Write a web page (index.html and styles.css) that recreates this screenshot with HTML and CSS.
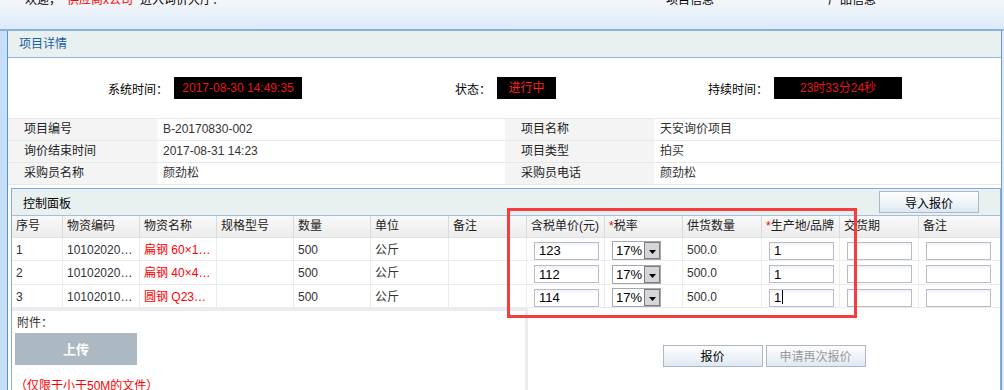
FILE: index.html
```html
<!DOCTYPE html>
<html lang="zh-CN">
<head>
    <meta charset="UTF-8">
    <meta name="viewport" content="width=device-width, initial-scale=1.0">
    <title>项目详情</title>
    <link rel="stylesheet" href="styles.css">
</head>
<body>
    <div class="topbar">
        <div class="welcome">欢迎，<span class="supplier">供应商x公司</span>进入询价大厅：</div>
        <div class="topnav">
            <span>项目信息</span>
            <span>产品信息</span>
        </div>
    </div>

    <div class="frame">
        <div class="rail"></div>
        <div class="main">
            <div class="panel-title">项目详情</div>

            <div class="time-row">
                <span class="tlabel">系统时间：</span>
                <span class="tbox tbox-wide">2017-08-30 14:49:35</span>
                <span class="tlabel tlabel-state">状态：</span>
                <span class="tbox tbox-state">进行中</span>
                <span class="tlabel tlabel-last">持续时间：</span>
                <span class="tbox tbox-wide">23时33分24秒</span>
            </div>

            <table class="info">
                <colgroup>
                    <col class="info-label">
                    <col class="info-value">
                    <col class="info-label">
                    <col class="info-value2">
                </colgroup>
                <tr>
                    <th>项目编号</th><td>B-20170830-002</td>
                    <th>项目名称</th><td>天安询价项目</td>
                </tr>
                <tr>
                    <th>询价结束时间</th><td>2017-08-31 14:23</td>
                    <th>项目类型</th><td>拍买</td>
                </tr>
                <tr>
                    <th>采购员名称</th><td>颜劲松</td>
                    <th>采购员电话</th><td>颜劲松</td>
                </tr>
            </table>

            <div class="control">
                <div class="control-head">
                    <span>控制面板</span>
                    <button class="btn">导入报价</button>
                </div>

                <table class="grid">
                    <colgroup>
                        <col class="w-no">
                        <col class="w-77"><col class="w-77"><col class="w-77"><col class="w-77">
                        <col class="w-78"><col class="w-78"><col class="w-78"><col class="w-78">
                        <col class="w-79"><col class="w-78"><col class="w-79"><col class="w-81">
                    </colgroup>
                    <tr>
                        <th>序号</th><th>物资编码</th><th>物资名称</th><th>规格型号</th><th>数量</th><th>单位</th><th>备注</th>
                        <th>含税单价(元)</th><th><span class="req">*</span>税率</th><th>供货数量</th><th><span class="req">*</span>生产地/品牌</th><th>交货期</th><th>备注</th>
                    </tr>
                    <tr>
                        <td>1</td><td>101020200011</td><td class="name">扁钢 60×10 Q235</td><td></td><td>500</td><td>公斤</td><td></td>
                        <td class="f"><input class="txt" value="123"></td>
                        <td class="f"><span class="sel"><span class="sel-val">17%</span><span class="sel-btn"><svg width="7" height="4" viewBox="0 0 7 4"><path d="M0 0h7L3.5 4z" fill="#000"/></svg></span></span></td>
                        <td>500.0</td>
                        <td class="f"><input class="txt" value="1"></td>
                        <td class="f"><input class="txt" value=""></td>
                        <td class="f"><input class="txt" value=""></td>
                    </tr>
                    <tr>
                        <td>2</td><td>101020200025</td><td class="name">扁钢 40×4 Q235</td><td></td><td>500</td><td>公斤</td><td></td>
                        <td class="f"><input class="txt" value="112"></td>
                        <td class="f"><span class="sel"><span class="sel-val">17%</span><span class="sel-btn"><svg width="7" height="4" viewBox="0 0 7 4"><path d="M0 0h7L3.5 4z" fill="#000"/></svg></span></span></td>
                        <td>500.0</td>
                        <td class="f"><input class="txt" value="1"></td>
                        <td class="f"><input class="txt" value=""></td>
                        <td class="f"><input class="txt" value=""></td>
                    </tr>
                    <tr>
                        <td>3</td><td>101020100003</td><td class="name">圆钢 Q235-A</td><td></td><td>500</td><td>公斤</td><td></td>
                        <td class="f"><input class="txt" value="114"></td>
                        <td class="f"><span class="sel"><span class="sel-val">17%</span><span class="sel-btn"><svg width="7" height="4" viewBox="0 0 7 4"><path d="M0 0h7L3.5 4z" fill="#000"/></svg></span></span></td>
                        <td>500.0</td>
                        <td class="f"><span class="fake-input">1<span class="caret"></span></span></td>
                        <td class="f"><input class="txt" value=""></td>
                        <td class="f"><input class="txt" value=""></td>
                    </tr>
                </table>

                <div class="bottom">
                    <div class="attach">
                        <div class="attach-label">附件：</div>
                        <button class="upload">上传</button>
                        <div class="note">（仅限于小于50M的文件）</div>
                    </div>
                    <div class="actions">
                        <button class="btn">报价</button>
                        <button class="btn btn-off">申请再次报价</button>
                    </div>
                </div>
            </div>
        </div>
        <div class="rail-right"></div>
    </div>

    <!-- annotation box drawn over the editable columns -->
    <div class="highlight"></div>
</body>
</html>
```

FILE: styles.css
```css
* {
    box-sizing: border-box;
}

html, body {
    margin: 0;
    height: 100%;
}

body {
    font-family: "Liberation Sans", "Noto Sans CJK SC", sans-serif;
    font-size: 12px;
    color: #000;
    background: #fff;
    overflow: hidden;
    position: relative;
}

/* top strip (page is scrolled a little) */
.topbar {
    height: 29px;
    display: flex;
    padding: 0 128px 0 25px;
    background: linear-gradient(#f5f7f9, #dcebfb);
    overflow: hidden;
}

.welcome,
.topnav {
    margin-top: -7px;
    height: 14px;
    line-height: 14px;
}

.supplier {
    color: #f00;
    margin: 0 7px 0 6px;
}

.topnav {
    margin-left: auto;
    display: flex;
    gap: 114px;
}

/* outer frame */
.frame {
    display: flex;
    height: 361px;
    border-top: 2px solid #8db2da;
    overflow: hidden;
}

.rail {
    flex: none;
    width: 8px;
    background: #c4dff7;
    border-right: 1px solid #5e92cf;
}

.rail-right {
    flex: none;
    width: 3px;
    background: #dde9f6;
    border-left: 1px solid #6b9bd3;
}

.main {
    flex: 1;
    min-width: 0;
    display: flex;
    flex-direction: column;
}

.panel-title {
    height: 27px;
    line-height: 26px;
    padding-left: 11px;
    background: #e8f1f0;
    border-bottom: 1px solid #90b4dc;
    color: #1c5da6;
}

/* timers */
.time-row {
    flex: none;
    height: 60px;
    display: flex;
    align-items: center;
    padding-left: 100px;
}

.tbox {
    height: 22px;
    line-height: 22px;
    margin-left: 6px;
    background: #000;
    color: #e4161b;
    text-align: center;
}

.tbox-wide {
    width: 128px;
}

.tbox-state {
    width: 59px;
    color: #ff2020;
}

.tlabel-state {
    margin-left: 153px;
}

.tlabel-last {
    margin-left: 152px;
}

/* project info */
.info {
    width: 100%;
    border-collapse: separate;
    border-spacing: 0;
    border-top: 1px solid #e8e8e8;
    table-layout: fixed;
}

.info-label {
    width: 150px;
}

.info-value {
    width: 347px;
}

.info-value2 {
    width: 346px;
}

.info th,
.info td {
    padding: 0 0 0 5px;
    line-height: 21px;
    border-bottom: 1px solid #e8e8e8;
    text-align: left;
    font-weight: normal;
}

.info th {
    padding-left: 16px;
    background: #f4f4f4;
    color: #222;
    border-right: 1px solid #fafafa;
}

.info td {
    color: #333;
}

/* control panel */
.control {
    flex: 1;
    display: flex;
    flex-direction: column;
    margin: 3px 0 0 3px;
    border: 1px solid #86acd8;
    border-bottom: none;
}

.control-head {
    flex: none;
    height: 27px;
    display: flex;
    align-items: center;
    justify-content: space-between;
    padding: 0 21px 0 11px;
    background: #e8f1f0;
    border-bottom: 1px solid #a2bfdf;
}

.btn {
    width: 100px;
    height: 22px;
    padding: 0;
    font-family: inherit;
    font-size: 12px;
    color: #000;
    background: linear-gradient(#fdfdfd, #f2f6fa 45%, #dde8f4);
    border: 1px solid #b0b6c6;
}

.btn-off {
    color: #9a9a9a;
}

.grid {
    width: 988px;
    table-layout: fixed;
    border-collapse: separate;
    border-spacing: 0;
}

.w-no { width: 51px; }
.w-77 { width: 77px; }
.w-78 { width: 78px; }
.w-79 { width: 79px; }
.w-81 { width: 81px; }

.grid th,
.grid td {
    padding: 0 4px;
    white-space: nowrap;
    overflow: hidden;
    text-overflow: ellipsis;
    text-align: left;
    font-weight: normal;
}

.grid th {
    line-height: 21px;
    color: #222;
    background: linear-gradient(#f9f9f9, #ececec);
    border-right: 1px solid #dadada;
    border-bottom: 1px solid #e2e2e2;
}

.grid td {
    padding-top: 3px;
    line-height: 19px;
    color: #333;
    border-right: 1px solid #ececec;
    border-bottom: 1px solid #ececec;
}

.grid th:last-child,
.grid td:last-child {
    border-right: none;
}

.req {
    color: #f00;
}

.grid td.name {
    color: #f00;
}

.grid td.f {
    padding: 2px 0 0 7px;
    line-height: 20px;
    text-overflow: clip;
}

.txt,
.fake-input {
    display: inline-block;
    width: 65px;
    height: 18px;
    padding: 0 4px;
    vertical-align: middle;
    font-family: "Liberation Sans", sans-serif;
    font-size: 13px;
    line-height: 16px;
    color: #000;
    background: linear-gradient(#f1f1f4, #fff 4px);
    border: 1px solid #b7bccb;
    outline: none;
}

.caret {
    display: inline-block;
    width: 1px;
    height: 14px;
    margin-left: 1px;
    vertical-align: -2px;
    background: #000;
}

.sel {
    display: inline-flex;
    width: 49px;
    height: 19px;
    vertical-align: middle;
    background: #fff;
    border: 1px solid #a5a9b2;
}

.sel-val {
    flex: 1;
    padding-left: 3px;
    font-size: 13px;
    line-height: 17px;
    color: #000;
}

.sel-btn {
    width: 16px;
    display: flex;
    align-items: center;
    justify-content: center;
    padding-top: 3px;
    background: #d6d6d6;
    border: 1px solid #7b7b7b;
}

/* attachment + actions */
.bottom {
    flex: 1;
    display: flex;
}

.attach {
    flex: none;
    width: 516px;
    padding: 4px 0 0 3px;
    border-top: 3px solid #ebebf1;
    border-right: 3px solid #ebebf1;
}

.attach-label {
    padding-left: 2px;
    line-height: 16px;
    color: #333;
}

.upload {
    display: block;
    width: 122px;
    height: 32px;
    margin-top: 2px;
    padding: 0;
    font-family: inherit;
    font-size: 13px;
    font-weight: bold;
    color: #fff;
    background: #adb9c2;
    border: none;
}

.note {
    margin-top: 14px;
    line-height: 14px;
    color: #f00;
}

.actions {
    flex: 1;
    display: flex;
    justify-content: center;
    align-items: flex-start;
    gap: 3px;
    padding-top: 37px;
}

.highlight {
    position: absolute;
    left: 507px;
    top: 208px;
    width: 350px;
    height: 110px;
    border: 3px solid #f63c3c;
    pointer-events: none;
}
```
